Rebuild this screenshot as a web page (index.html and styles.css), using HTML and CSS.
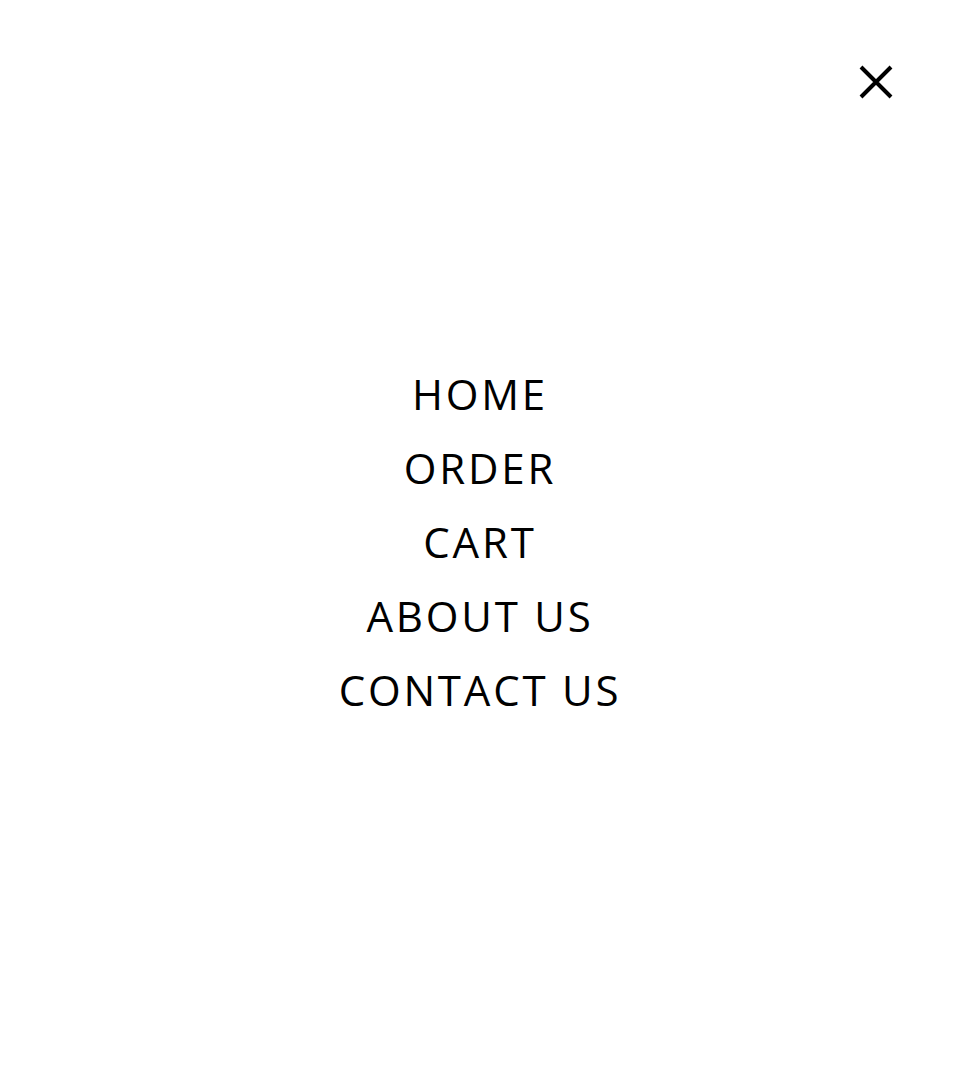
FILE: index.html
```html
<!DOCTYPE html>
<html lang="en">
<head>
<meta charset="utf-8">
<title>Menu</title>
<link rel="stylesheet" href="styles.css">
</head>
<body>
<div class="overlay">
  <button class="close" aria-label="Close menu">
    <svg width="34" height="34" viewBox="0 0 34 34" aria-hidden="true">
      <path d="M2 2 L32 32 M32 2 L2 32" stroke="#000" stroke-width="4" stroke-linecap="butt" fill="none"/>
    </svg>
  </button>
  <nav class="menu">
    <ul class="menu-list">
      <li class="menu-item"><a href="#">HOME</a></li>
      <li class="menu-item"><a href="#">ORDER</a></li>
      <li class="menu-item"><a href="#">CART</a></li>
      <li class="menu-item"><a href="#">ABOUT US</a></li>
      <li class="menu-item"><a href="#">CONTACT US</a></li>
    </ul>
  </nav>
</div>
</body>
</html>
```

FILE: styles.css
```css
html, body {
  margin: 0;
  padding: 0;
  background: #fff;
}
.overlay {
  position: relative;
  min-height: 100vh;
  display: flex;
  align-items: center;
  justify-content: center;
}
.close {
  position: absolute;
  top: 65px;
  right: 67px;
  width: 34px;
  height: 34px;
  padding: 0;
  border: 0;
  background: none;
  cursor: pointer;
}
.close svg {
  display: block;
}
.menu-list {
  list-style: none;
  margin: 0;
  padding: 0;
  text-align: center;
}
.menu-item {
  font-family: "Open Sans", sans-serif;
  font-size: 42px;
  font-weight: 400;
  letter-spacing: 2.8px;
  line-height: 74px;
  padding-top: 2px;
  margin-bottom: -2px;
}
.menu-item a {
  color: #000;
  text-decoration: none;
}
```
